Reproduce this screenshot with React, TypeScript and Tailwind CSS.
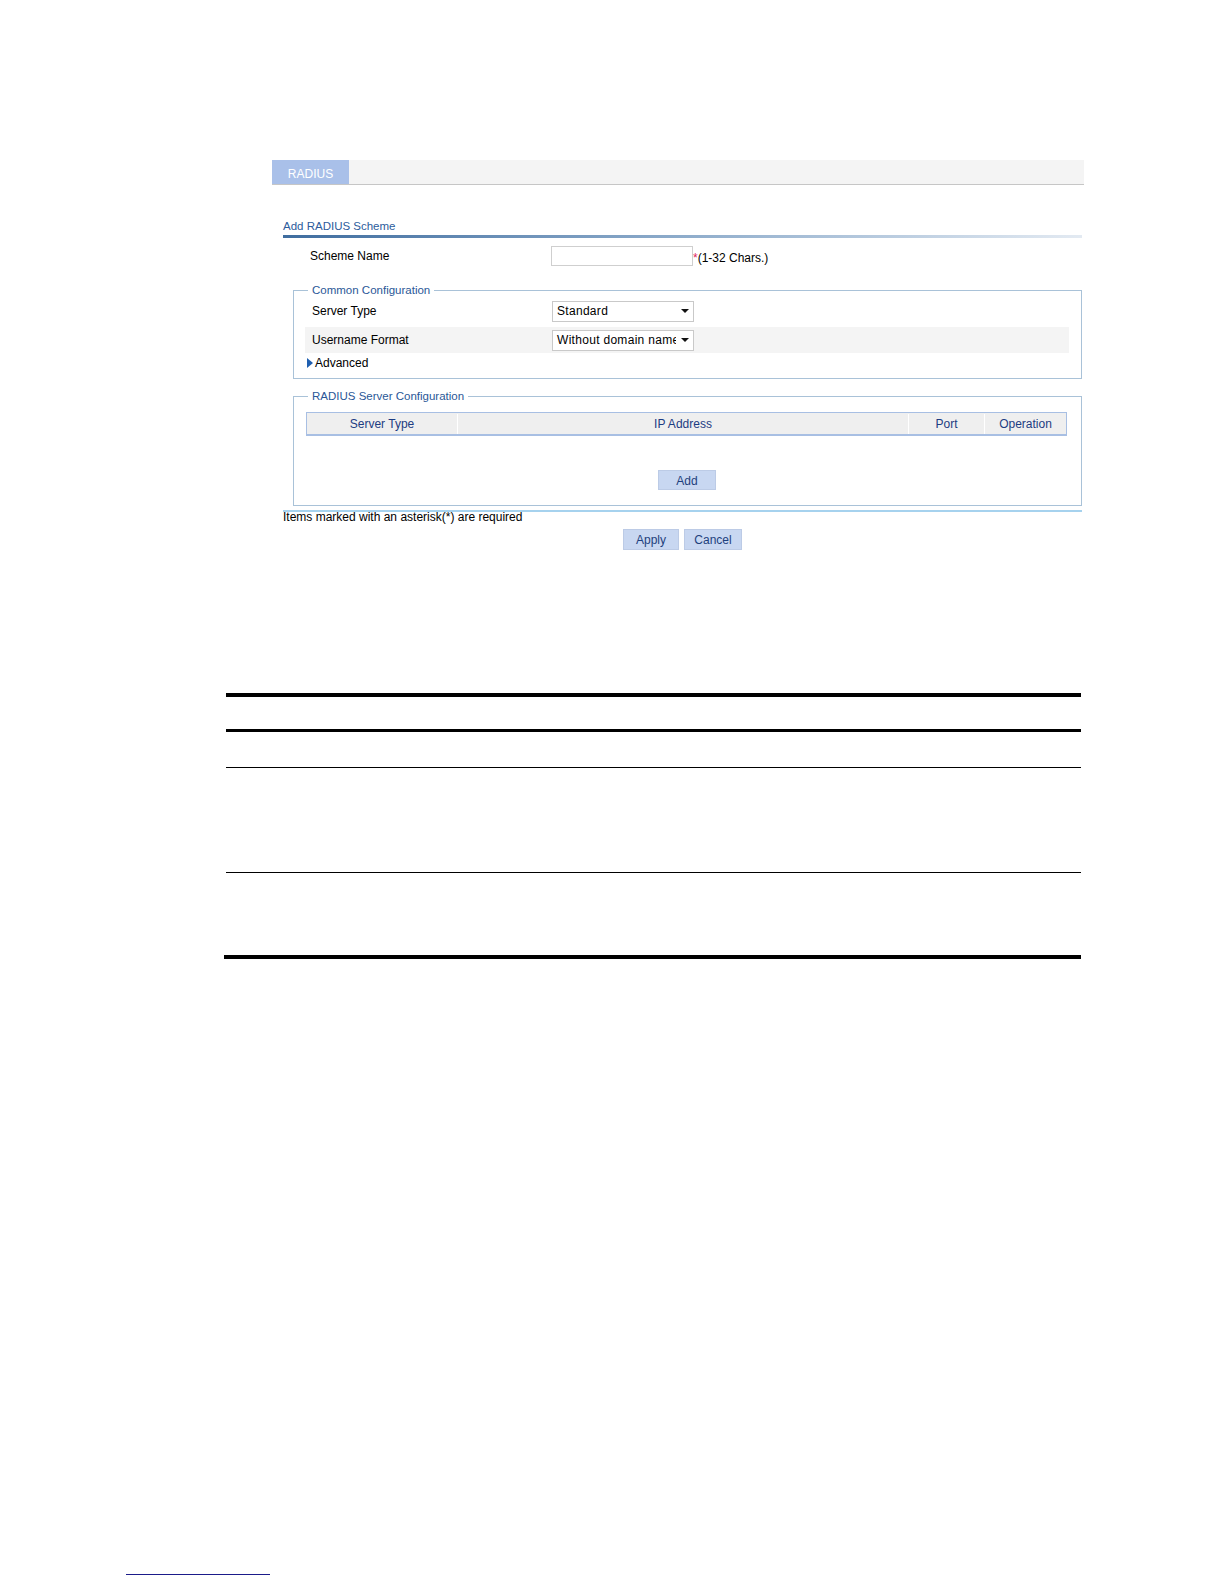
import React from "react";

function Select({ value }: { value: string }) {
  return (
    <div className="flex h-[21px] w-[142px] items-center border border-[#c9c9c9] bg-white">
      <div className="flex-1 overflow-hidden whitespace-nowrap pl-[4px] text-[12px] leading-[19px] tracking-[0.3px] text-black">
        {value}
      </div>
      <div className="flex w-[17px] items-center justify-center">
        <svg width="8" height="4" viewBox="0 0 8 4">
          <polygon points="0,0 8,0 4,4" fill="#111" />
        </svg>
      </div>
    </div>
  );
}

function Btn({ label, w }: { label: string; w: string }) {
  return (
    <div
      className={`flex h-[21px] ${w} items-center justify-center border border-[#bccbe6] bg-[#c8d7f1] pt-[1px] text-[12px] text-[#1e3f7d]`}
    >
      {label}
    </div>
  );
}

export default function App() {
  return (
    <div
      className="relative h-[1584px] w-[1224px] overflow-hidden bg-white"
      style={{ fontFamily: '"Liberation Sans", Arial, sans-serif' }}
    >
      {/* Tab bar */}
      <div className="pl-[272px] pt-[160px]">
        <div className="flex h-[25px] w-[812px] border-b border-[#c6c6c6] bg-[#f4f4f4]">
          <div className="flex w-[77px] items-center justify-center bg-[#a9c0e9] pt-[3px] text-[12px] text-white">
            RADIUS
          </div>
        </div>
      </div>

      {/* Form */}
      <div className="ml-[283px] w-[799px]">
        <div className="mt-[34px] h-[14px] text-[11.5px] leading-[14px] text-[#2d5c9c]">
          Add RADIUS Scheme
        </div>
        <div className="mt-[2px] h-[3px] bg-gradient-to-r from-[#3f6d9f] via-[#8eaccb] to-[#e3eaf2]" />

        <div className="mt-[8px] flex h-[20px] items-center">
          <div className="w-[268px] pl-[27px] text-[12px] text-black">Scheme Name</div>
          <div className="h-[20px] w-[142px] border border-[#cfcfcf] bg-white" />
          <div className="flex h-[20px] items-end">
            <span className="text-[12px] leading-[16px] text-[#e0245e]">*</span>
            <span className="text-[12px] leading-[16px] text-black">(1-32 Chars.)</span>
          </div>
        </div>

        {/* Common Configuration */}
        <fieldset className="ml-[10px] mt-[17px] w-[789px] border border-[#a9c2d8] pb-[7px] pl-[11px] pr-[12px] pt-[1px]">
          <legend className="ml-[3px] px-[4px] text-[11.5px] leading-[14px] text-[#2a5797]">
            Common Configuration
          </legend>
          <div className="flex h-[26px] items-center">
            <div className="w-[247px] pl-[7px] text-[12px] text-black">Server Type</div>
            <Select value="Standard" />
          </div>
          <div className="mt-[3px] flex h-[26px] items-center bg-[#f4f4f4]">
            <div className="w-[247px] pl-[7px] text-[12px] text-black">Username Format</div>
            <Select value="Without domain name" />
          </div>
          <div className="mt-[2px] flex h-[16px] items-center pl-[2px]">
            <svg width="6" height="10" viewBox="0 0 6 10" className="mr-[2px]">
              <polygon points="0,0 6,5 0,10" fill="#1f5fb0" />
            </svg>
            <span className="text-[12px] text-black">Advanced</span>
          </div>
        </fieldset>

        {/* RADIUS Server Configuration */}
        <fieldset className="ml-[10px] mt-[10px] w-[789px] border border-[#a9c2d8] pb-[15px] pl-[11px] pr-[12px] pt-[9px]">
          <legend className="ml-[3px] px-[4px] text-[11.5px] leading-[14px] text-[#2a5797]">
            RADIUS Server Configuration
          </legend>
          <div className="ml-[1px] flex h-[24px] w-[761px] border border-b-2 border-[#a8bfe3] bg-[#efefef] pt-[1px] text-[12px] text-[#1d3c82]">
            <div className="flex w-[151px] items-center justify-center border-r border-white">Server Type</div>
            <div className="flex w-[451px] items-center justify-center border-r border-white">IP Address</div>
            <div className="flex w-[76px] items-center justify-center border-r border-white">Port</div>
            <div className="flex flex-1 items-center justify-center">Operation</div>
          </div>
          <div className="mt-[34px] flex justify-center">
            <div className="flex h-[20px] w-[58px] items-center justify-center border border-[#bccbe6] bg-[#c8d7f1] pt-[1px] text-[12px] text-[#1e3f7d]">
              Add
            </div>
          </div>
        </fieldset>

        <div className="mt-[4px] h-[2px] bg-[#a6d2ee]" />
        <div className="h-[10px] text-[12px] leading-[10px] text-black">
          Items marked with an asterisk(*) are required
        </div>
        <div className="mt-[7px] flex justify-center gap-[5px]">
          <Btn label="Apply" w="w-[56px]" />
          <Btn label="Cancel" w="w-[58px]" />
        </div>
      </div>

      {/* Empty rule table */}
      <div className="ml-[226px] mt-[143px] w-[855px]">
        <div className="h-[4px] bg-black" />
        <div className="h-[32px]" />
        <div className="h-[3px] bg-black" />
        <div className="h-[35px]" />
        <div className="h-[1px] bg-black" />
        <div className="h-[104px]" />
        <div className="h-[1px] bg-black" />
        <div className="h-[82px]" />
        <div className="-ml-[2px] h-[4px] bg-black" />
      </div>

      {/* Footnote rule */}
      <div className="ml-[126px] mt-[615px] h-[1px] w-[144px] bg-[#1b1b8a]" />
    </div>
  );
}
